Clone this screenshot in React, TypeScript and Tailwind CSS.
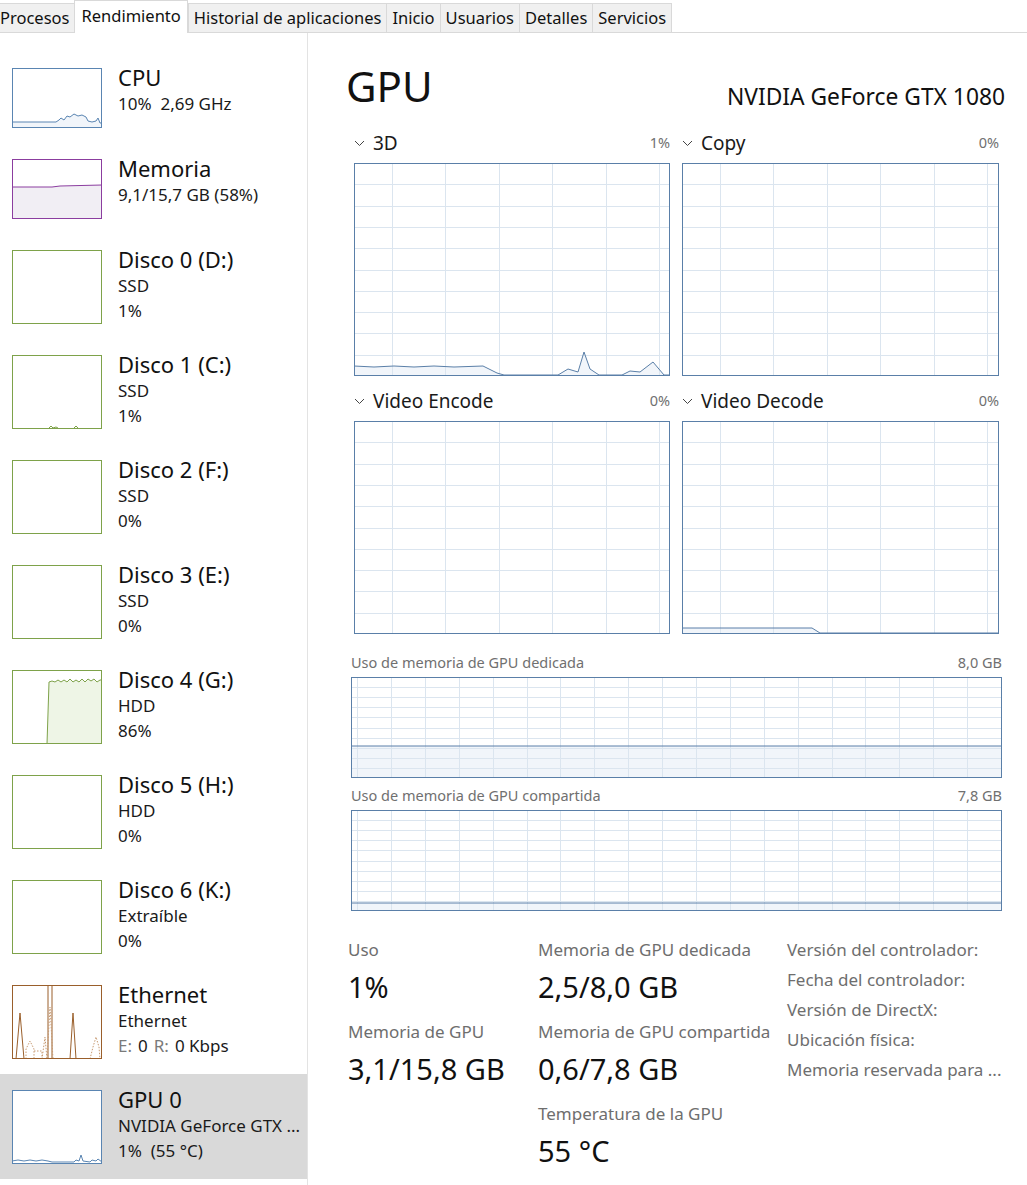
import React from 'react';

type Pt = [number, number];

// small chevron used before each engine name
const Chevron = () => (
  <svg width="11" height="7" viewBox="0 0 11 7" className="mr-[8px] mt-[1px]">
    <polyline points="1,1 5.5,5.5 10,1" fill="none" stroke="#444" strokeWidth="1" />
  </svg>
);

const toPath = (pts: Pt[]) => pts.map((p, i) => `${i ? 'L' : 'M'}${p[0]},${p[1]}`).join(' ');

const Graph = ({
  w,
  h,
  colW,
  colOffset,
  rows,
  data,
  fillColor = '#f1f5fa',
  stroke = '#5a7fa8',
  grid = '#dbe5ef',
}: {
  w: number;
  h: number;
  colW: number;
  colOffset: number;
  rows: number;
  data?: Pt[];
  fillColor?: string;
  stroke?: string;
  grid?: string;
}) => {
  const cols: number[] = [];
  for (let x = colOffset; x < w; x += colW) cols.push(Math.round(x) + 0.5);
  const hs: number[] = [];
  for (let i = 1; i < rows; i++) hs.push(Math.round((i * h) / rows) + 0.5);
  return (
    <svg width={w} height={h} className="block">
      {data && (
        <path d={`${toPath(data)} L${data[data.length - 1][0]},${h} L${data[0][0]},${h} Z`} fill={fillColor} />
      )}
      {cols.map((x) => (
        <line key={'v' + x} x1={x} y1={0} x2={x} y2={h} stroke={grid} strokeWidth="1" />
      ))}
      {hs.map((y) => (
        <line key={'h' + y} x1={0} y1={y} x2={w} y2={y} stroke={grid} strokeWidth="1" />
      ))}
      {data && <path d={toPath(data)} fill="none" stroke={stroke} strokeWidth="1" />}
      <rect x={0.5} y={0.5} width={w - 1} height={h - 1} fill="none" stroke={stroke} strokeWidth="1" />
    </svg>
  );
};

// sidebar thumbnails
const Thumb = ({ h, color, children }: { h: number; color: string; children?: React.ReactNode }) => (
  <svg width={90} height={h} className="block shrink-0 bg-white">
    {children}
    <rect x={0.5} y={0.5} width={89} height={h - 1} fill="none" stroke={color} strokeWidth="1" />
  </svg>
);

const cpuLine: Pt[] = [
  [0, 54], [44, 54], [47, 52], [49, 50], [52, 52], [55, 48], [58, 49], [62, 46], [66, 48], [70, 47], [74, 49], [76, 53],
  [80, 54], [84, 53], [86, 50], [88, 55], [90, 55],
];
const memLine: Pt[] = [[0, 28], [40, 28], [48, 27], [90, 26]];
const disk4Line: Pt[] = [
  [35, 74], [37, 12], [40, 11], [43, 12], [46, 10], [49, 12], [52, 10], [55, 12], [58, 9], [61, 12], [64, 10], [67, 12],
  [70, 9], [73, 12], [76, 9], [79, 11], [82, 9], [85, 12], [88, 10], [90, 10],
];
const gpuThumb: Pt[] = [
  [0, 71], [6, 70], [12, 71], [18, 70], [24, 71], [30, 70], [36, 71], [40, 72], [62, 72], [64, 70], [67, 71], [69, 65],
  [71, 71], [78, 72], [80, 70], [84, 71], [86, 69], [90, 72],
];

const SideItem = ({
  title,
  lines,
  thumb,
  selected,
}: {
  title: string;
  lines: React.ReactNode[];
  thumb: React.ReactNode;
  selected?: boolean;
}) => (
  <div className={`flex pl-[12px] pt-[16px] pb-[15px] ${selected ? 'bg-[#d9d9d9]' : ''}`}>
    {thumb}
    <div className="ml-[16px] -mt-[4px] flex flex-col">
      <div className="text-[22px] leading-[26px] text-[#111] mb-[1px]">{title}</div>
      {lines.map((l, i) => (
        <div key={i} className="text-[17px] leading-[25px] text-[#1a1a1a] whitespace-pre">
          {l}
        </div>
      ))}
    </div>
  </div>
);

const EngineGraph = ({ name, pct, data, w }: { name: string; pct: string; data?: Pt[]; w: number }) => (
  <div className="flex flex-col">
    <div className="flex items-center h-[24px]">
      <Chevron />
      <span className="text-[19px] text-[#1a1a1a]">{name}</span>
      <span className="ml-auto text-[14.5px] text-[#707070]">{pct}</span>
    </div>
    <div className="mt-[8px]">
      <Graph w={w} h={213} colW={53.4} colOffset={38} rows={10} data={data} />
    </div>
  </div>
);

const d3Line: Pt[] = [
  [0, 203], [20, 204], [40, 203], [60, 204], [80, 203], [100, 204], [129, 203], [135, 206], [143, 210], [150, 212],
  [204, 212], [214, 206], [224, 209], [230, 189], [236, 206], [245, 212], [268, 212], [276, 208], [286, 209],
  [299, 199], [310, 212], [316, 212],
];
const decodeLine: Pt[] = [[0, 207], [130, 207], [138, 212], [317, 212]];

const Stat = ({ label, value }: { label: string; value: string }) => (
  <div className="flex flex-col">
    <div className="text-[17px] leading-[22px] text-[#6e6e6e]">{label}</div>
    <div className="text-[29px] leading-[38px] text-[#111] mt-[7px]">{value}</div>
  </div>
);

const tabs = ['Procesos', 'Rendimiento', 'Historial de aplicaciones', 'Inicio', 'Usuarios', 'Detalles', 'Servicios'];

export default function App() {
  const green = '#7ea24a';
  return (
    <div className="w-[1027px] h-[1185px] bg-white overflow-hidden font-['Noto_Sans','Open_Sans',sans-serif] text-[#111]">
      {/* tab strip */}
      <div className="flex items-end h-[33px] border-b border-[#d9d9d9] -ml-[6px]">
        {tabs.map((t) =>
          t === 'Rendimiento' ? (
            <div
              key={t}
              className="h-[33px] -mb-px px-[6px] pt-[4px] bg-white border-x border-t border-[#d9d9d9] text-[16.5px] leading-[22px]"
            >
              {t}
            </div>
          ) : (
            <div
              key={t}
              className="h-[29px] px-[5px] pt-[3px] bg-[#f0f0f0] border-l border-t border-[#d9d9d9] last:border-r text-[16.5px] leading-[22px]"
            >
              {t}
            </div>
          )
        )}
      </div>

      <div className="flex">
        {/* sidebar */}
        <div className="w-[308px] shrink-0 border-r border-[#e3e3e3] pt-[19px] h-[1152px]">
          <SideItem
            title="CPU"
            lines={['10%  2,69 GHz']}
            thumb={
              <Thumb h={60} color="#5a85b2">
                <path d={`${toPath(cpuLine)} L90,60 L0,60 Z`} fill="#f1f5fa" />
                <path d={toPath(cpuLine)} fill="none" stroke="#5a85b2" />
              </Thumb>
            }
          />
          <SideItem
            title="Memoria"
            lines={['9,1/15,7 GB (58%)']}
            thumb={
              <Thumb h={60} color="#8b3d9f">
                <path d={`${toPath(memLine)} L90,60 L0,60 Z`} fill="#f1eef4" />
                <path d={toPath(memLine)} fill="none" stroke="#8b3d9f" />
              </Thumb>
            }
          />
          <SideItem title="Disco 0 (D:)" lines={['SSD', '1%']} thumb={<Thumb h={74} color={green} />} />
          <SideItem
            title="Disco 1 (C:)"
            lines={['SSD', '1%']}
            thumb={
              <Thumb h={74} color={green}>
                <path d="M37,73 L39,71 L41,73 L44,72 L46,73" fill="none" stroke={green} />
                <path d="M62,73 L64,71 L66,73" fill="none" stroke={green} />
              </Thumb>
            }
          />
          <SideItem title="Disco 2 (F:)" lines={['SSD', '0%']} thumb={<Thumb h={74} color={green} />} />
          <SideItem title="Disco 3 (E:)" lines={['SSD', '0%']} thumb={<Thumb h={74} color={green} />} />
          <SideItem
            title="Disco 4 (G:)"
            lines={['HDD', '86%']}
            thumb={
              <Thumb h={74} color={green}>
                <path d={`${toPath(disk4Line)} L90,74 Z`} fill="#eef5e6" />
                <path d={toPath(disk4Line)} fill="none" stroke={green} />
              </Thumb>
            }
          />
          <SideItem title="Disco 5 (H:)" lines={['HDD', '0%']} thumb={<Thumb h={74} color={green} />} />
          <SideItem title="Disco 6 (K:)" lines={['Extraíble', '0%']} thumb={<Thumb h={74} color={green} />} />
          <SideItem
            title="Ethernet"
            lines={[
              'Ethernet',
              <>
                <span className="text-[#7a7a7a]">E:</span>
                <span className="ml-[6px]">0</span>
                <span className="ml-[6px] text-[#7a7a7a]">R:</span>
                <span className="ml-[6px]">0 Kbps</span>
              </>,
            ]}
            thumb={
              <Thumb h={74} color="#9a5f2b">
                <path d="M4,74 L8,28 L12,74" fill="none" stroke="#9a5f2b" />
                <path d="M58,74 L61,28 L64,74" fill="none" stroke="#9a5f2b" />
                <path d="M36,74 L36,0 M40,74 L40,0" fill="none" stroke="#9a5f2b" />
                <path d="M35,74 L38,22 L41,74" fill="none" stroke="#c79a72" strokeDasharray="1.5 1.5" />
                <path d="M14,74 L14,64 L18,56 L22,64 L22,74 M22,66 L30,66 L30,74 M30,74 L33,52 L35,74" fill="none" stroke="#c79a72" strokeDasharray="1.5 1.5" />
                <path d="M78,74 L81,62 L84,52 L87,62 L88,74" fill="none" stroke="#c79a72" strokeDasharray="1.5 1.5" />
              </Thumb>
            }
          />
          <SideItem
            title="GPU 0"
            selected
            lines={['NVIDIA GeForce GTX ...', '1%  (55 °C)']}
            thumb={
              <Thumb h={74} color="#5a85b2">
                <path d={toPath(gpuThumb)} fill="none" stroke="#5a85b2" />
              </Thumb>
            }
          />
        </div>

        {/* detail pane */}
        <div className="flex-1 pl-[38px] pr-[22px] pt-[26px]">
          <div className="flex items-end justify-between">
            <div className="text-[42px] leading-[54px] text-[#111]">GPU</div>
            <div className="text-[22.8px] leading-[30px] text-[#111] mb-[1px]">NVIDIA GeForce GTX 1080</div>
          </div>

          <div className="grid grid-cols-[316px_317px] gap-x-[12px] gap-y-[13px] ml-[8px] mt-[18px]">
            <EngineGraph name="3D" pct="1%" data={d3Line} w={316} />
            <EngineGraph name="Copy" pct="0%" w={317} />
            <EngineGraph name="Video Encode" pct="0%" w={316} />
            <EngineGraph name="Video Decode" pct="0%" data={decodeLine} w={317} />
          </div>

          <div className="ml-[5px] mt-[18px] w-[651px]">
            <div className="flex justify-between text-[14.5px] leading-[20px] text-[#707070]">
              <span>Uso de memoria de GPU dedicada</span>
              <span>8,0 GB</span>
            </div>
            <div className="mt-[5px]">
              <Graph w={651} h={101} colW={33.9} colOffset={6} rows={10} data={[[0, 69], [651, 69]]} />
            </div>
            <div className="flex justify-between text-[14.5px] leading-[20px] text-[#707070] mt-[7px]">
              <span>Uso de memoria de GPU compartida</span>
              <span>7,8 GB</span>
            </div>
            <div className="mt-[5px]">
              <Graph w={651} h={101} colW={33.9} colOffset={6} rows={10} data={[[0, 93], [651, 93]]} />
            </div>
          </div>

          <div className="flex mt-[28px] ml-[2px]">
            <div className="w-[190px] flex flex-col gap-[15px]">
              <Stat label="Uso" value="1%" />
              <Stat label="Memoria de GPU" value="3,1/15,8 GB" />
            </div>
            <div className="w-[249px] flex flex-col gap-[15px]">
              <Stat label="Memoria de GPU dedicada" value="2,5/8,0 GB" />
              <Stat label="Memoria de GPU compartida" value="0,6/7,8 GB" />
              <Stat label="Temperatura de la GPU" value="55 °C" />
            </div>
            <div className="flex flex-col text-[17px] leading-[30px] text-[#6e6e6e] -mt-[4px]">
              <span>Versión del controlador:</span>
              <span>Fecha del controlador:</span>
              <span>Versión de DirectX:</span>
              <span>Ubicación física:</span>
              <span>Memoria reservada para ...</span>
            </div>
          </div>
        </div>
      </div>
    </div>
  );
}
